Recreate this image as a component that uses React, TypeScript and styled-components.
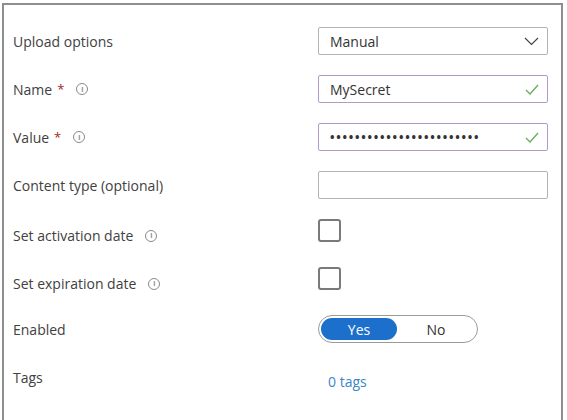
import React from "react";
import styled, { createGlobalStyle } from "styled-components";

const GlobalStyle = createGlobalStyle`
  html, body {
    margin: 0;
    padding: 0;
    background: #ffffff;
    overflow: hidden;
  }
  body {
    font-family: "Open Sans", "Noto Sans", Arial, sans-serif;
    color: #3d3d3d;
  }
`;

const Page = styled.div`
  width: 567px;
  height: 420px;
  padding: 3px 4px 0 2px;
  box-sizing: border-box;
`;

// the panel's bottom edge is cut off by the screenshot
const Frame = styled.div`
  border: 2px solid #8e8e8e;
  border-bottom: none;
  height: 417px;
  box-sizing: border-box;
  padding: 22px 0 0 9px;
  display: flex;
  flex-direction: column;
  gap: 20px;
  overflow: hidden;
`;

const Row = styled.div`
  display: grid;
  grid-template-columns: 305px 230px;
  height: 28px;
  flex-shrink: 0;
  align-items: center;
`;

const Label = styled.div`
  display: flex;
  align-items: center;
  font-size: 14px;
  color: #414141;
  white-space: nowrap;
`;

const Required = styled.span`
  color: #a4262c;
  margin-left: 5px;
  font-size: 13px;
`;

const InfoIcon = styled.span`
  display: inline-flex;
  align-items: center;
  justify-content: center;
  width: 10px;
  height: 10px;
  border: 1.3px solid #8a8a8a;
  border-radius: 50%;
  margin-left: 12px;
  font-size: 7px;
  font-weight: 700;
  line-height: 1;
  color: #8a8a8a;
`;

const Field = styled.div<{ $valid?: boolean }>`
  height: 28px;
  box-sizing: border-box;
  border: 1px solid ${(p) => (p.$valid ? "#b29bc6" : "#b3b3b3")};
  border-radius: 2px;
  display: flex;
  align-items: center;
  justify-content: space-between;
  padding: 0 8px 0 11px;
  font-size: 14px;
  color: #333333;
`;

const Dots = styled.span`
  font-size: 12px;
  font-weight: 700;
  letter-spacing: 1.75px;
  color: #333333;
`;

const Checkbox = styled.div`
  width: 23px;
  height: 23px;
  box-sizing: border-box;
  border: 2px solid #7a7a7a;
  border-radius: 3px;
  margin-bottom: 10px;
`;

const Toggle = styled.div`
  width: 160px;
  height: 28px;
  box-sizing: border-box;
  border: 1px solid #9a9a9a;
  border-radius: 14px;
  padding: 2px;
  display: flex;
`;

const ToggleOption = styled.div<{ $active?: boolean }>`
  width: ${(p) => (p.$active ? "76px" : "auto")};
  flex: ${(p) => (p.$active ? "none" : "1")};
  border-radius: 11px;
  display: flex;
  align-items: center;
  justify-content: center;
  font-size: 14px;
  background: ${(p) => (p.$active ? "#1c70cc" : "transparent")};
  color: ${(p) => (p.$active ? "#ffffff" : "#333333")};
`;

const Link = styled.span`
  padding-left: 10px;
  margin-top: 8px;
  font-size: 14px;
  color: #3a86c8;
`;

const Chevron = () => (
  <svg width="15" height="9" viewBox="0 0 15 9">
    <path d="M1 1 L7.5 7.5 L14 1" fill="none" stroke="#444" strokeWidth="1.2" />
  </svg>
);

const Check = () => (
  <svg width="14" height="11" viewBox="0 0 14 11">
    <path d="M1 6 L5 10 L13 1" fill="none" stroke="#6aae5a" strokeWidth="1.3" />
  </svg>
);

const Info = () => <InfoIcon>i</InfoIcon>;

export default function App() {
  return (
    <Page>
      <GlobalStyle />
      <Frame>
        <Row>
          <Label>Upload options</Label>
          <Field>
            Manual
            <Chevron />
          </Field>
        </Row>
        <Row>
          <Label>
            Name<Required>*</Required>
            <Info />
          </Label>
          <Field $valid>
            MySecret
            <Check />
          </Field>
        </Row>
        <Row>
          <Label>
            Value<Required>*</Required>
            <Info />
          </Label>
          <Field $valid>
            <Dots>••••••••••••••••••••••••</Dots>
            <Check />
          </Field>
        </Row>
        <Row>
          <Label>Content type (optional)</Label>
          <Field />
        </Row>
        <Row>
          <Label>
            Set activation date
            <Info />
          </Label>
          <Checkbox />
        </Row>
        <Row>
          <Label>
            Set expiration date
            <Info />
          </Label>
          <Checkbox />
        </Row>
        <Row>
          <Label>Enabled</Label>
          <Toggle>
            <ToggleOption $active>Yes</ToggleOption>
            <ToggleOption>No</ToggleOption>
          </Toggle>
        </Row>
        <Row>
          <Label>Tags</Label>
          <Link>0 tags</Link>
        </Row>
      </Frame>
    </Page>
  );
}
